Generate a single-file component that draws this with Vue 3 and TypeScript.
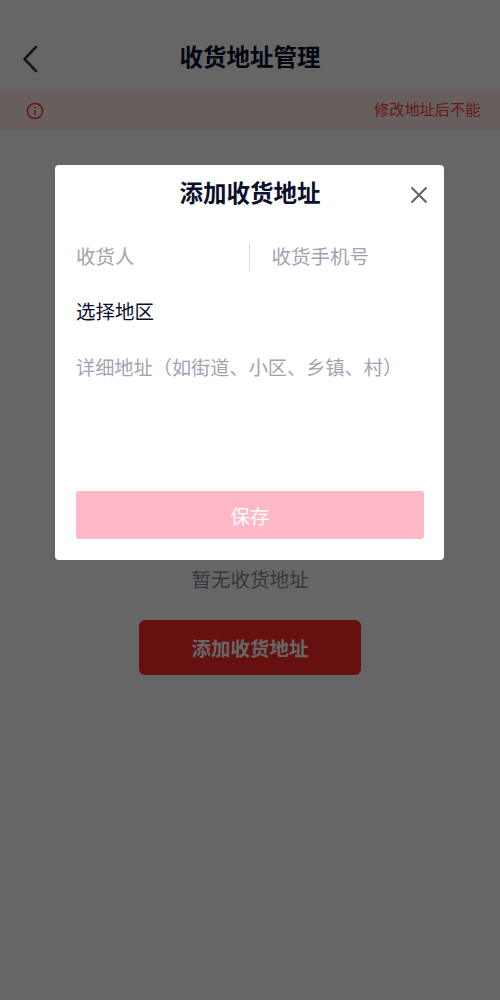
<script setup lang="ts">
const title = '收货地址管理'
const addLabel = '添加收货地址'
</script>

<template>
  <div class="page">
    <header class="header">
      <svg class="back" width="18" height="28" viewBox="0 0 18 28" fill="none">
        <path d="M15 2 L3.5 14 L15 26" stroke="#2c3e4a" stroke-width="2.6" stroke-linecap="round" stroke-linejoin="round" />
      </svg>
      <h1 class="title">{{ title }}</h1>
    </header>
    <div class="notice">
      <svg class="info" width="18" height="18" viewBox="0 0 18 18" fill="none">
        <circle cx="9" cy="9" r="7.6" stroke="#ff3b3b" stroke-width="1.5" />
        <path d="M9 8v5" stroke="#ff3b3b" stroke-width="1.5" />
        <path d="M9 4.8v1.6" stroke="#ff3b3b" stroke-width="1.5" />
      </svg>
      <div class="notice-clip"><span class="notice-text">修改地址后不能</span></div>
    </div>
    <main class="empty">
      <p class="empty-text">暂无收货地址</p>
      <button class="add" type="button">{{ addLabel }}</button>
    </main>

    <div class="overlay">
      <section class="dialog">
        <div class="dialog-head">
          <h2 class="dialog-title">{{ addLabel }}</h2>
          <svg class="close" width="18" height="18" viewBox="0 0 18 18" fill="none">
            <path d="M1.5 1.5 L16.5 16.5 M16.5 1.5 L1.5 16.5" stroke="#5f6469" stroke-width="2.1" />
          </svg>
        </div>
        <div class="row-two">
          <span class="field ph">收货人</span>
          <span class="divider"></span>
          <span class="field ph second">收货手机号</span>
        </div>
        <div class="region">选择地区</div>
        <div class="detail ph">详细地址（如街道、小区、乡镇、村）</div>
        <button class="save" type="button">保存</button>
      </section>
    </div>
  </div>
</template>

<style>
html, body { margin: 0; background: #fff; }
</style>

<style scoped>
.page {
  position: relative;
  width: 500px;
  height: 1000px;
  overflow: hidden;
  background: #fff;
  font-family: "Liberation Sans", "Noto Sans CJK SC", sans-serif;
  text-spacing-trim: space-all;
}
.header {
  position: relative;
  height: 90px;
  display: flex;
  align-items: center;
  justify-content: center;
  padding-top: 26px;
  box-sizing: border-box;
}
.back {
  position: absolute;
  left: 21px;
  top: 45px;
}
.title {
  margin: 0;
  font-size: 23.5px;
  line-height: 32px;
  font-weight: 700;
  color: #0a0f2c;
}
.notice {
  height: 41px;
  display: flex;
  align-items: center;
  background: #ffeeeb;
  padding-left: 26px;
}
.info { flex: none; }
.notice-clip {
  margin-left: 330px;
  width: 106px;
  white-space: nowrap;
  overflow: hidden;
  line-height: 22px;
  margin-top: -2px;
}
.notice-text {
  font-size: 15.2px;
  color: #ff3b3b;
}
.empty {
  display: flex;
  flex-direction: column;
  align-items: center;
  padding-top: 435px;
}
.empty-text {
  margin: 0;
  font-size: 19.5px;
  line-height: 28px;
  color: #888c96;
}
.add {
  margin-top: 26px;
  width: 222px;
  height: 55px;
  border: 0;
  border-radius: 6px;
  background: #ff2a2a;
  color: #fff;
  font: 700 19.5px "Liberation Sans", "Noto Sans CJK SC", sans-serif;
}
.overlay {
  position: absolute;
  inset: 0;
  background: rgba(0, 0, 0, 0.6);
  display: flex;
  justify-content: center;
  align-items: flex-start;
  padding-top: 165px;
  box-sizing: border-box;
}
.dialog {
  width: 389px;
  height: 395px;
  margin-right: 1px;
  box-sizing: border-box;
  background: #fff;
  border-radius: 4px;
  padding: 0 20px 0 21px;
  display: flex;
  flex-direction: column;
}
.dialog-head {
  position: relative;
  height: 57px;
  display: flex;
  align-items: center;
  justify-content: center;
}
.dialog-title {
  margin: 0;
  font-size: 23.5px;
  line-height: 32px;
  font-weight: 700;
  color: #0a0f2c;
}
.close {
  position: absolute;
  right: -4px;
  top: 21px;
}
.row-two {
  margin-top: 21px;
  height: 28px;
  display: flex;
  align-items: center;
}
.field {
  font-size: 19.5px;
  line-height: 28px;
}
.ph { color: #a0a4b0; }
.divider {
  width: 1px;
  height: 28px;
  background: #dcdee2;
  margin-left: 114px;
}
.field.second { margin-left: 22px; }
.region {
  margin-top: 27px;
  font-size: 19.5px;
  line-height: 28px;
  color: #0a0f2c;
}
.detail {
  margin-top: 29px;
  font-size: 19.2px;
  line-height: 28px;
  white-space: nowrap;
}
.save {
  margin-top: 108px;
  height: 48px;
  border: 0;
  border-radius: 3px;
  background: #ffb9c6;
  color: #fff;
  font: 400 19.5px "Liberation Sans", "Noto Sans CJK SC", sans-serif;
}
</style>
